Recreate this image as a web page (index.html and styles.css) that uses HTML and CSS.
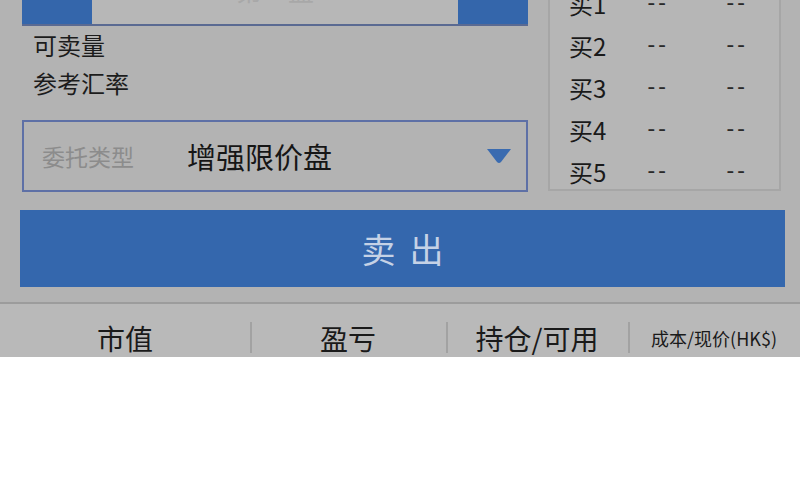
FILE: index.html
```html
<!DOCTYPE html>
<html lang="zh-CN">
<head>
<meta charset="utf-8">
<title>卖出</title>
<link rel="stylesheet" href="styles.css">
</head>
<body>
<div class="screen">
  <div class="top">
    <div class="left">
      <div class="stepper">
        <div class="step-btn"></div>
        <div class="step-value">第一盘</div>
        <div class="step-btn"></div>
      </div>
      <div class="info-row">可卖量</div>
      <div class="info-row">参考汇率</div>
      <div class="select">
        <span class="select-label">委托类型</span>
        <span class="select-value">增强限价盘</span>
        <svg class="select-arrow" width="26" height="16" viewBox="0 0 26 16"><path d="M1 1 H25 L15 14 Q13 16 11 14 Z" fill="#3a6bb0"/></svg>
      </div>
    </div>
    <div class="book">
      <div class="book-row"><span class="bk">买1</span><span class="bd">--</span><span class="bd">--</span></div>
      <div class="book-row"><span class="bk">买2</span><span class="bd">--</span><span class="bd">--</span></div>
      <div class="book-row"><span class="bk">买3</span><span class="bd">--</span><span class="bd">--</span></div>
      <div class="book-row"><span class="bk">买4</span><span class="bd">--</span><span class="bd">--</span></div>
      <div class="book-row"><span class="bk">买5</span><span class="bd">--</span><span class="bd">--</span></div>
    </div>
  </div>
  <div class="sell">卖出</div>
  <div class="tabs">
    <div class="tab t1">市值</div>
    <div class="tab t2">盈亏</div>
    <div class="tab t3">持仓/可用</div>
    <div class="tab t4 small">成本/现价(HK$)</div>
  </div>
</div>
</body>
</html>
```
FILE: styles.css
```css
html, body {
  margin: 0;
  padding: 0;
  background: #ffffff;
}
body {
  width: 800px;
  height: 500px;
  overflow: hidden;
  font-family: "Noto Sans CJK SC", "Noto Sans", sans-serif;
  color: #1c1c1c;
}
.screen {
  height: 357px;
  background: #b3b3b3;
  overflow: hidden;
}
.top {
  display: flex;
  margin-top: -20px;
  padding-left: 22px;
  gap: 20px;
  height: 213px;
}
.left {
  width: 506px;
  display: flex;
  flex-direction: column;
}
.stepper {
  height: 44px;
  display: flex;
  border-bottom: 2px solid #5a6a92;
}
.step-btn {
  width: 70px;
  background: #3466ab;
}
.step-value {
  flex: 1;
  background: #b7b7b7;
  text-align: center;
  font-size: 26px;
  line-height: 20px;
  color: #a8a8a8;
  overflow: hidden;
}
.info-row {
  height: 38px;
  line-height: 38px;
  font-size: 24px;
  padding-left: 11px;
  color: #1c1c1c;
}
.select {
  margin-top: 18px;
  height: 68px;
  border: 2px solid #5e70a6;
  display: flex;
  align-items: center;
  padding-left: 18px;
  padding-right: 14px;
}
.select-label {
  font-size: 23px;
  color: #8c8c8c;
  width: 145px;
}
.select-value {
  font-size: 29px;
  color: #161616;
  flex: 1;
}
.select-arrow {
  display: block;
}
.book {
  width: 233px;
  height: 211px;
  box-sizing: border-box;
  background: #b6b6b6;
  border: 2px solid #a6a6a6;
  border-top: none;
  padding-top: 2px;
  overflow: hidden;
}
.book-row {
  height: 42px;
  display: flex;
  align-items: center;
  padding-left: 19px;
  font-size: 24px;
  color: #1a1a1a;
}
.bk {
  flex: 0 0 79px;
  font-family: "Noto Sans CJK SC", Roboto, sans-serif;
}
.bd {
  flex: 0 0 79px;
  font-family: Roboto, sans-serif;
  font-size: 24px;
  letter-spacing: 4px;
  color: #2a2a2a;
}
.bd:last-child {
  flex: 0 0 auto;
}
.sell {
  margin: 17px 15px 0 20px;
  height: 77px;
  background: #3467ad;
  color: #c5d2e6;
  font-size: 34px;
  line-height: 77px;
  text-align: center;
  letter-spacing: 14px;
  text-indent: 14px;
}
.tabs {
  margin-top: 15px;
  border-top: 2px solid #9c9c9c;
  background: #b9b9b9;
  height: 54px;
  display: flex;
  align-items: center;
}
.tab {
  height: 54px;
  line-height: 68px;
  font-size: 28px;
  text-align: center;
  color: #1a1a1a;
  position: relative;
}
.tab + .tab::before {
  content: "";
  position: absolute;
  left: 0;
  top: 18px;
  height: 31px;
  width: 2px;
  background: #a2a2a2;
}
.t1 { width: 250px; }
.t2 { width: 196px; }
.t3 { width: 182px; }
.t4 { width: 172px; }
.small {
  font-size: 18px;
  letter-spacing: 0;
}
```
